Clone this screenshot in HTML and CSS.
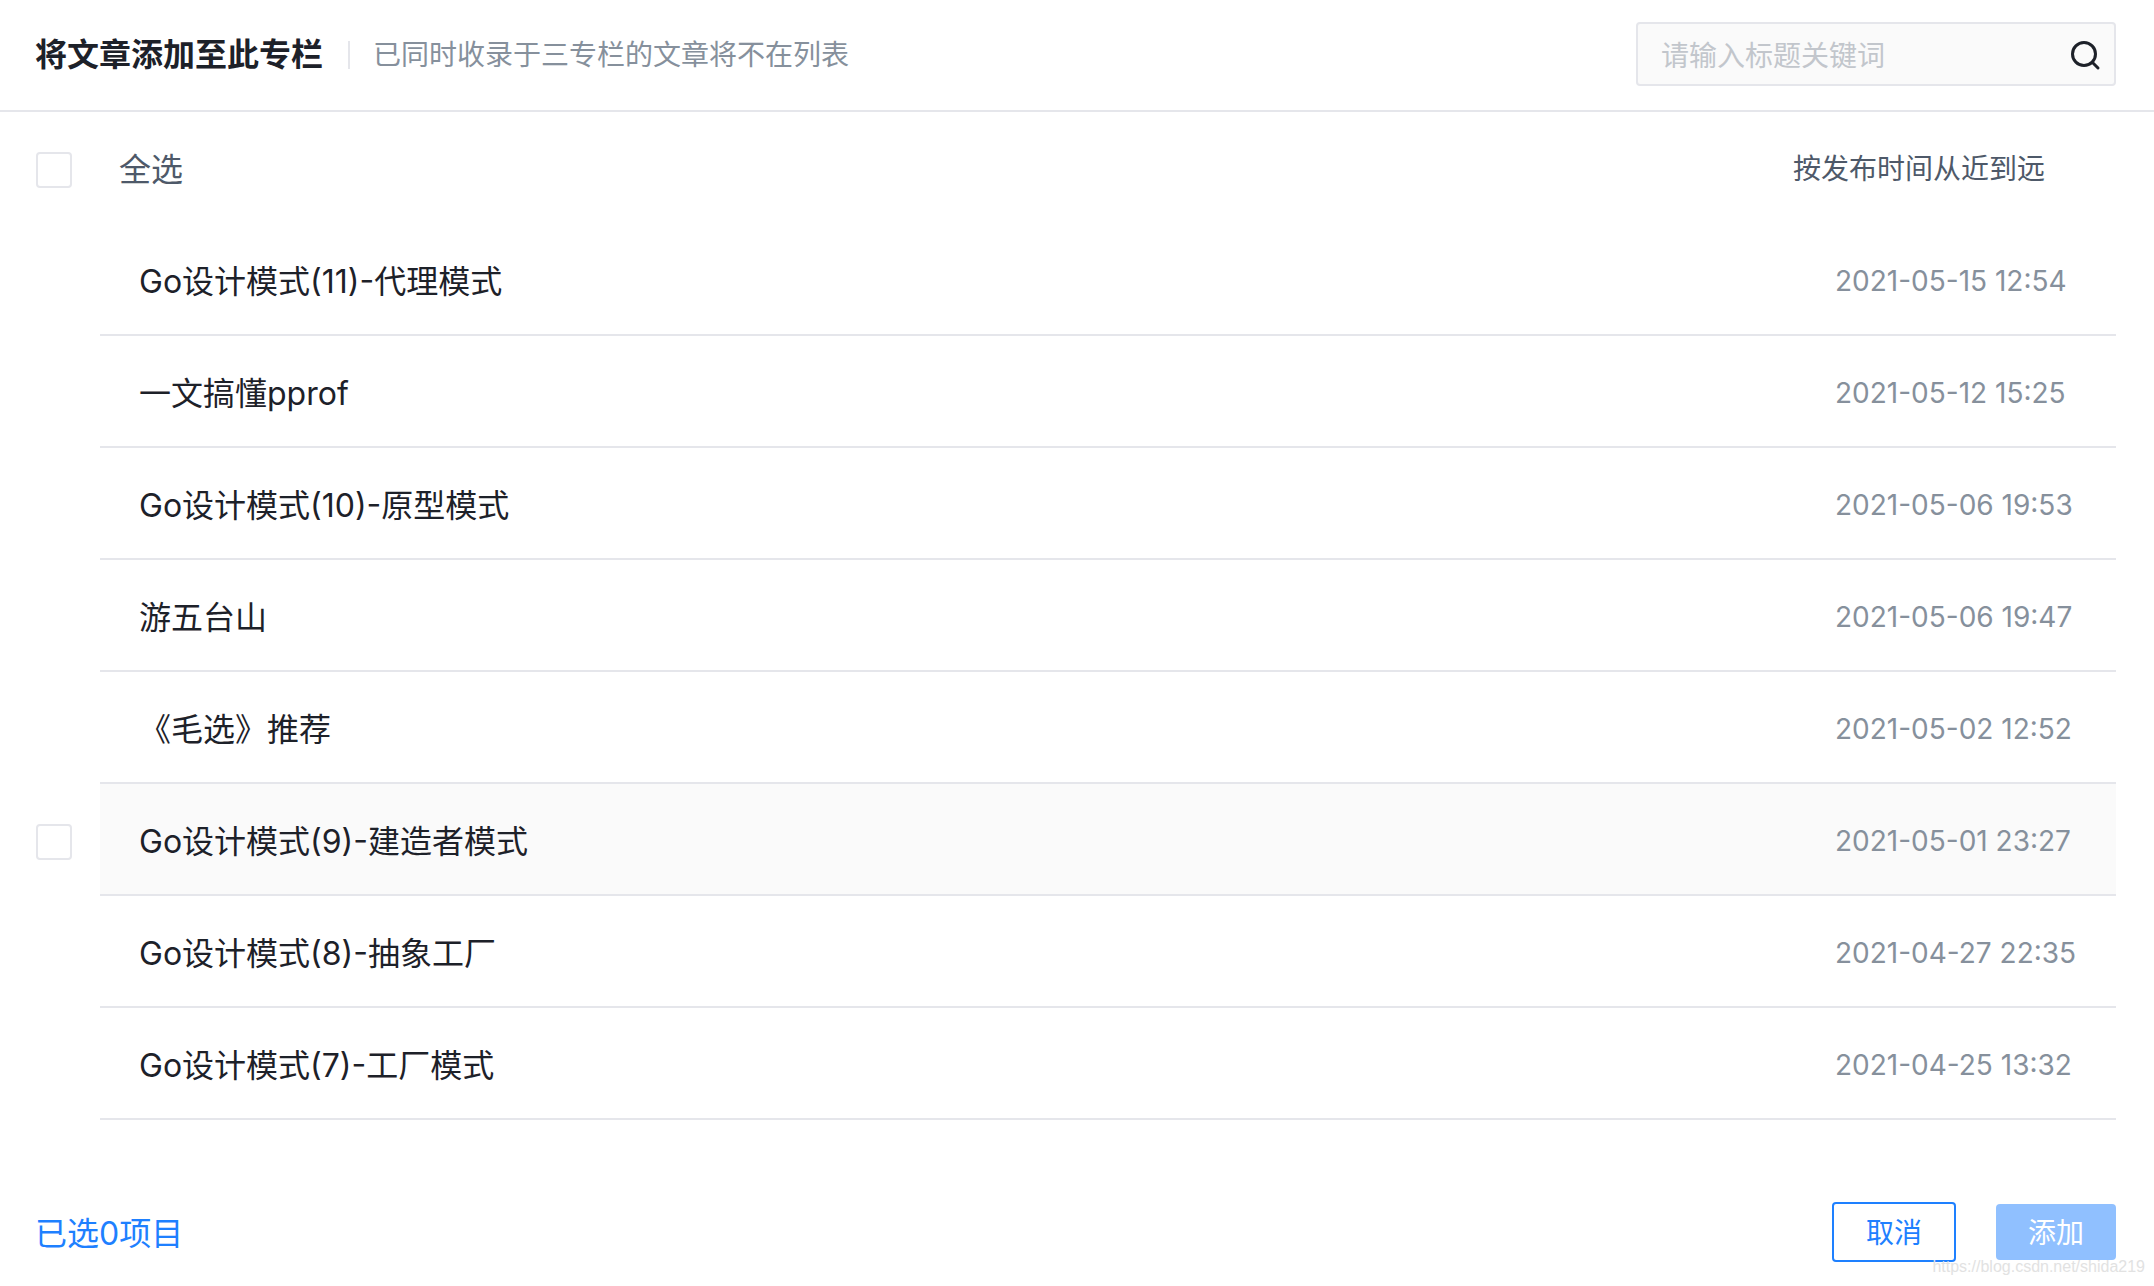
FILE: index.html
```html
<!DOCTYPE html>
<html lang="zh-CN">
<head>
  <meta charset="UTF-8" />
  <meta name="viewport" content="width=device-width, initial-scale=1.0" />
  <title>将文章添加至此专栏</title>
  <link rel="stylesheet" href="styles.css">
</head>
<body>
<div class="dialog">
  <div class="header">
    <h1>将文章添加至此专栏</h1>
    <span class="header-tip">已同时收录于三专栏的文章将不在列表</span>
    <div class="search">
      <input type="text" placeholder="请输入标题关键词" />
      <svg width="32" height="32" viewBox="0 0 32 32" fill="none" stroke="#1d2129" stroke-width="3" stroke-linecap="round">
        <circle cx="15" cy="15" r="11.5" />
        <path d="M23.5 23.5L29 29" />
      </svg>
    </div>
  </div>
  <div class="select-all">
    <span class="check"></span>
    <span class="select-label">全选</span>
    <span class="sort">按发布时间从近到远</span>
  </div>
  <div class="list">
    <div class="row"><div class="check-cell"></div><div class="row-body"><span class="row-title">Go设计模式(11)-代理模式</span><span class="row-date">2021-05-15 12:54</span></div></div>
    <div class="row"><div class="check-cell"></div><div class="row-body"><span class="row-title">一文搞懂pprof</span><span class="row-date">2021-05-12 15:25</span></div></div>
    <div class="row"><div class="check-cell"></div><div class="row-body"><span class="row-title">Go设计模式(10)-原型模式</span><span class="row-date">2021-05-06 19:53</span></div></div>
    <div class="row"><div class="check-cell"></div><div class="row-body"><span class="row-title">游五台山</span><span class="row-date">2021-05-06 19:47</span></div></div>
    <div class="row"><div class="check-cell"></div><div class="row-body"><span class="row-title">《毛选》推荐</span><span class="row-date">2021-05-02 12:52</span></div></div>
    <div class="row hover"><div class="check-cell"><span class="check"></span></div><div class="row-body"><span class="row-title">Go设计模式(9)-建造者模式</span><span class="row-date">2021-05-01 23:27</span></div></div>
    <div class="row"><div class="check-cell"></div><div class="row-body"><span class="row-title">Go设计模式(8)-抽象工厂</span><span class="row-date">2021-04-27 22:35</span></div></div>
    <div class="row"><div class="check-cell"></div><div class="row-body"><span class="row-title">Go设计模式(7)-工厂模式</span><span class="row-date">2021-04-25 13:32</span></div></div>
  </div>
  <div class="footer">
    <span class="count">已选0项目</span>
    <button class="btn btn-cancel">取消</button>
    <button class="btn btn-add">添加</button>
  </div>
</div>
<div class="watermark">https://blog.csdn.net/shida219</div>
</body>
</html>
```

FILE: styles.css
```css
:root {
  --text: #1d2129;
  --muted: #86909c;
  --line: #e5e6eb;
  --blue: #1e80ff;
}
* {
  box-sizing: border-box;
}
html, body {
  margin: 0;
  padding: 0;
  height: 100%;
  overflow: hidden;
  background: #fff;
  color: var(--text);
  font-family: Inter, "Noto Sans CJK SC", sans-serif;
}
.dialog {
  width: 2154px;
  height: 1286px;
}
.header {
  display: flex;
  align-items: center;
  height: 112px;
  padding: 0 38px 0 35px;
  border-bottom: 2px solid var(--line);
}
h1 {
  margin: 0;
  font-size: 32px;
  font-weight: 600;
  line-height: 48px;
}
.header-tip {
  margin-left: 25px;
  padding-left: 23px;
  border-left: 2px solid var(--line);
  font-size: 28px;
  line-height: 28px;
  color: var(--muted);
}
.search {
  display: flex;
  align-items: center;
  width: 480px;
  height: 64px;
  margin-left: auto;
  margin-bottom: 2px;
  padding: 0 13px 0 23px;
  background: #fafafa;
  border: 2px solid var(--line);
  border-radius: 4px;
}
.search input {
  flex: 1;
  min-width: 0;
  padding: 4px 0 0;
  border: none;
  outline: none;
  background: transparent;
  font: inherit;
  font-size: 28px;
  color: var(--text);
}
.search input::placeholder {
  color: #c2c6cc;
  opacity: 1;
}
.search svg {
  margin-top: 2px;
}
.check {
  display: block;
  width: 36px;
  height: 36px;
  margin-top: 3px;
  background: #fff;
  border: 2px solid var(--line);
  border-radius: 4px;
}
.select-all {
  display: flex;
  align-items: center;
  height: 112px;
  padding: 0 109px 0 36px;
}
.select-label {
  margin-left: 47px;
  margin-bottom: 3px;
  font-size: 32px;
  color: #4e5969;
}
.sort {
  margin-left: auto;
  margin-bottom: 3px;
  font-size: 28px;
  color: #4e5969;
}
.row {
  display: flex;
  height: 112px;
  padding: 0 38px 0 36px;
}
.check-cell {
  display: flex;
  align-items: center;
  width: 64px;
  flex-shrink: 0;
}
.row-body {
  flex: 1;
  display: flex;
  align-items: center;
  padding-left: 39px;
  border-bottom: 2px solid var(--line);
}
.row.hover .row-body {
  background: #fafafa;
}
.row-title {
  font-size: 32px;
  margin-bottom: 1px;
}
.row-date {
  margin-left: auto;
  width: 281px;
  padding-top: 3px;
  font-size: 28px;
  color: var(--muted);
}
.footer {
  display: flex;
  align-items: center;
  height: 60px;
  margin-top: 82px;
  padding: 0 38px 0 35px;
}
.count {
  margin-right: auto;
  margin-bottom: 3px;
  font-size: 32px;
  color: var(--blue);
}
.btn {
  font-family: inherit;
  font-size: 28px;
  border-radius: 4px;
  padding: 0 0 2px;
}
.btn-cancel {
  width: 124px;
  height: 60px;
  background: #fff;
  color: var(--blue);
  border: 2px solid var(--blue);
}
.btn-add {
  width: 120px;
  height: 56px;
  margin-left: 40px;
  background: #90c0ff;
  color: #fff;
  border: none;
}
.watermark {
  position: absolute;
  right: 9px;
  bottom: 9px;
  font-family: "Liberation Sans", Arial, sans-serif;
  font-size: 16px;
  line-height: 20px;
  color: #e2e2e2;
}
```
